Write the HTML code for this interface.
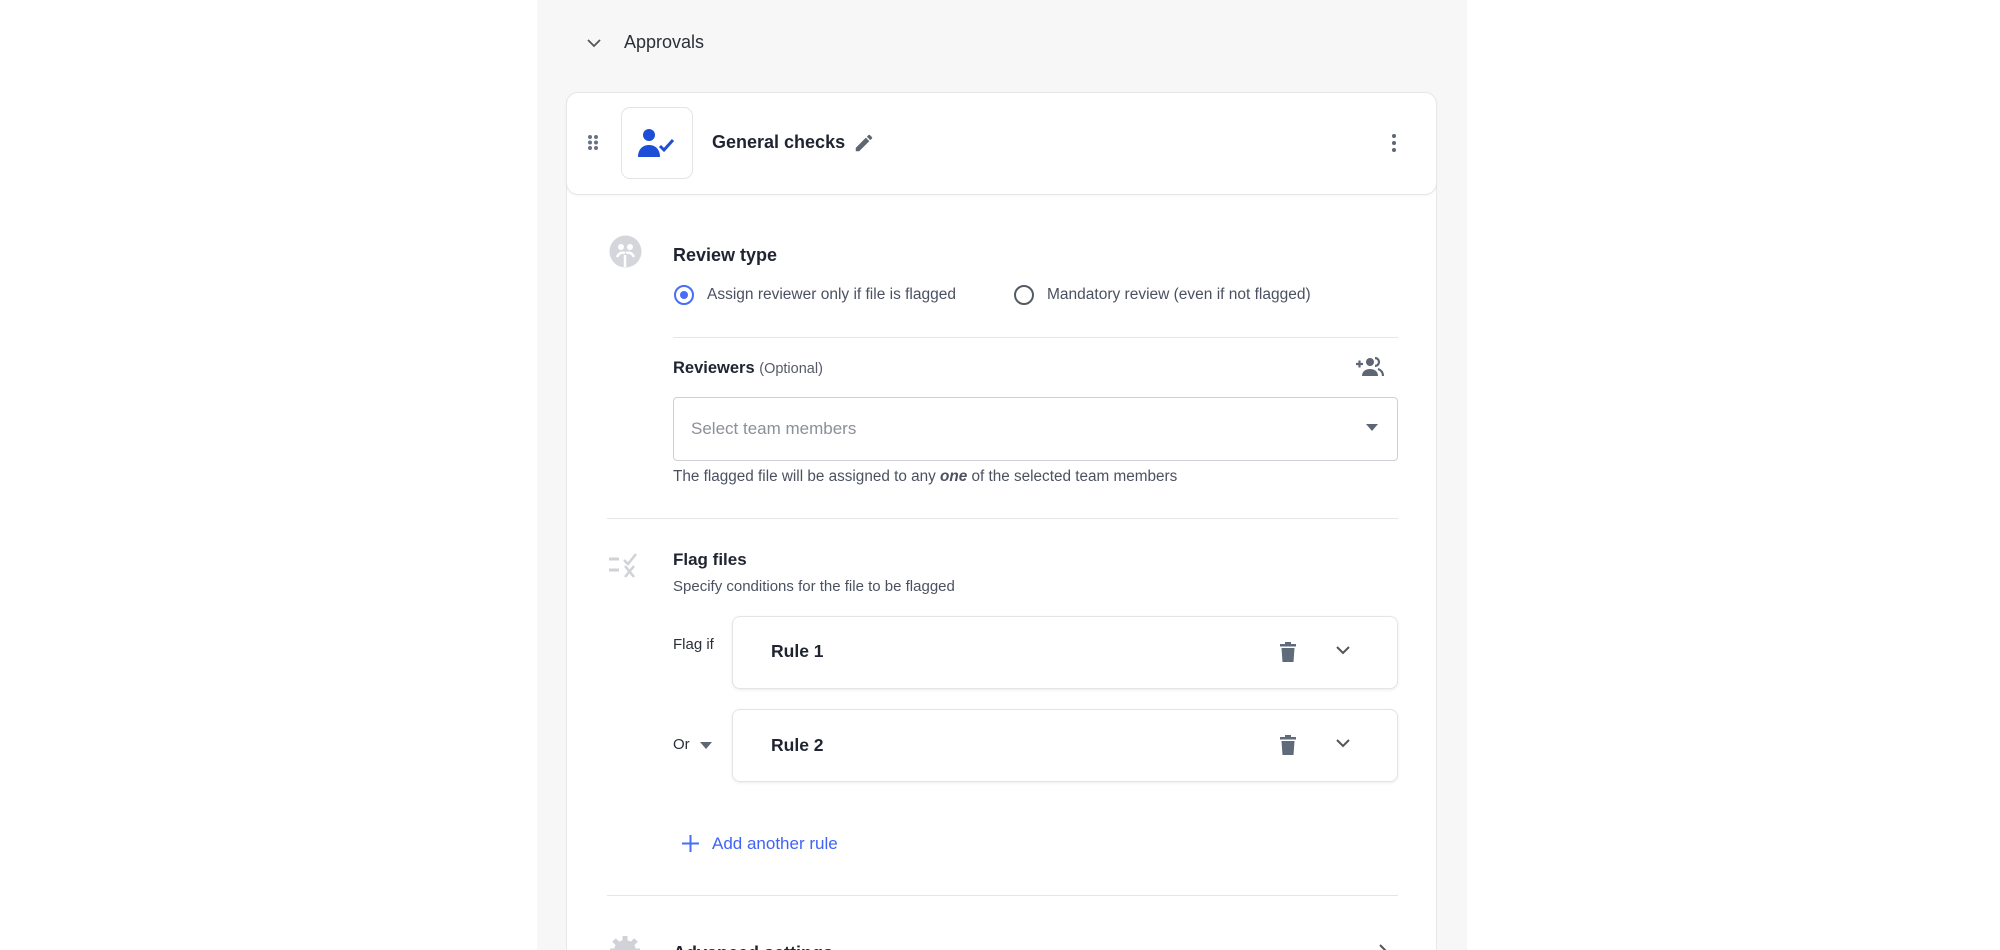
<!DOCTYPE html>
<html style="width:2000px;height:950px;overflow:hidden"><head><meta charset="utf-8"><style>
*{box-sizing:border-box;margin:0;padding:0}
body{width:2000px;height:950px;background:#fff;font-family:"Liberation Sans",sans-serif;color:#1f2430;position:relative;overflow:hidden}
.abs{position:absolute}
.panel{left:537px;top:0;width:930px;height:950px;background:#f7f7f7}
.card{left:566px;top:92px;width:871px;height:858px;background:#fff;border:1px solid #e6e7ea;border-bottom:none;border-radius:12px 12px 0 0}
.hdr{left:566px;top:92px;width:871px;height:103px;border:1px solid #e6e7ea;border-radius:12px;background:#fff;box-shadow:0 1px 2px rgba(0,0,0,.04)}
.t{position:absolute;white-space:nowrap;line-height:1}
.hr{position:absolute;height:1px;background:#e5e6e9}
.rule{position:absolute;left:732px;width:666px;height:73px;border:1px solid #e3e4e8;border-radius:8px;background:#fff;box-shadow:0 1px 3px rgba(0,0,0,.08)}
</style></head><body>
<div class="abs panel"></div>
<svg class="abs" style="left:586px;top:35px" width="16" height="16" viewBox="0 0 16 16"><path d="M2 5l6 6 6-6" fill="none" stroke="#555" stroke-width="1.8"/></svg>
<div class="t" style="left:624px;top:33px;font-size:18px;color:#2a2f3a">Approvals</div>
<div class="abs card"></div>
<div class="abs hdr"></div>
<svg class="abs" style="left:587px;top:134px" width="12" height="17"><g fill="#6b7280"><circle cx="3" cy="3" r="2"/><circle cx="9" cy="3" r="2"/><circle cx="3" cy="8.5" r="2"/><circle cx="9" cy="8.5" r="2"/><circle cx="3" cy="14" r="2"/><circle cx="9" cy="14" r="2"/></g></svg>
<div class="abs" style="left:621px;top:107px;width:72px;height:72px;border:1px solid #e3e4e8;border-radius:9px;background:#fff"></div>
<svg class="abs" style="left:637px;top:128px" width="40" height="30" viewBox="0 0 40 30"><g fill="#1d4ed8"><circle cx="12" cy="7" r="6"/><path d="M1 29c0-8 5-12 11-12s11 4 11 12z"/></g><path d="M23 18l4 4 9-10" fill="none" stroke="#1d4ed8" stroke-width="3"/></svg>
<div class="t" style="left:712px;top:133px;font-size:18px;font-weight:bold;color:#1f2430">General checks</div>
<svg class="abs" style="left:853px;top:132px" width="22" height="22" viewBox="0 0 24 24"><path d="M3 17.25V21h3.75L17.8 9.94l-3.75-3.75zM20.7 7.04a1 1 0 000-1.41l-2.34-2.34a1 1 0 00-1.41 0l-1.830 1.83 3.75 3.75z" fill="#5f6673"/></svg>
<svg class="abs" style="left:1390px;top:133px" width="8" height="20"><g fill="#5f6673"><circle cx="4" cy="3" r="2"/><circle cx="4" cy="10" r="2"/><circle cx="4" cy="17" r="2"/></g></svg>

<svg class="abs" style="left:609px;top:235px" width="33" height="33" viewBox="0 0 33 33"><circle cx="16.5" cy="16.5" r="16" fill="#d4d6db"/><circle cx="12" cy="12" r="3" fill="#fff"/><circle cx="21" cy="12" r="3" fill="#fff"/><path d="M8 22c2-4 5-5 8-4M25 22c-2-4-5-5-8-4M16 20v12" stroke="#fff" stroke-width="2.5" fill="none"/></svg>
<div class="t" style="left:673px;top:246px;font-size:18px;font-weight:bold;color:#1f2430">Review type</div>
<div class="abs" style="left:674px;top:285px;width:20px;height:20px;border:2px solid #4a6cf7;border-radius:50%"></div>
<div class="abs" style="left:680px;top:291px;width:8px;height:8px;background:#4a6cf7;border-radius:50%"></div>
<div class="t" style="left:707px;top:287px;font-size:15.5px;color:#4b5160">Assign reviewer only if file is flagged</div>
<div class="abs" style="left:1014px;top:285px;width:20px;height:20px;border:2px solid #555b66;border-radius:50%"></div>
<div class="t" style="left:1047px;top:287px;font-size:15.5px;color:#4b5160">Mandatory review (even if not flagged)</div>
<div class="hr" style="left:673px;top:337px;width:725px"></div>
<div class="t" style="left:673px;top:360px;font-size:16.5px;font-weight:bold;color:#1f2430">Reviewers <span style="font-weight:normal;font-size:14.5px;color:#555b66">(Optional)</span></div>
<svg class="abs" style="left:1355px;top:356px" width="30" height="22" viewBox="0 0 30 22"><path d="M1 8h7M4.5 4.5v7" stroke="#5f6673" stroke-width="2.2"/><circle cx="15" cy="6" r="4" fill="#5f6673"/><path d="M7 20c0-5 4-7 8-7s8 2 8 7z" fill="#5f6673"/><path d="M20 2a4 4 0 010 8M23 13c3 1 5 3 5 7" stroke="#5f6673" stroke-width="2.2" fill="none"/></svg>
<div class="abs" style="left:673px;top:397px;width:725px;height:64px;border:1px solid #cfd1d6;border-radius:4px"></div>
<div class="t" style="left:691px;top:420px;font-size:17px;color:#8a8f99">Select team members</div>
<svg class="abs" style="left:1366px;top:424px" width="12" height="8"><path d="M0 0h12L6 7z" fill="#5f6673"/></svg>
<div class="t" style="left:673px;top:469px;font-size:15.3px;color:#4b5160">The flagged file will be assigned to any <b><i>one</i></b> of the selected team members</div>
<div class="hr" style="left:607px;top:518px;width:791px"></div>

<svg class="abs" style="left:609px;top:553px" width="30" height="25" viewBox="0 0 30 25"><path d="M0 6h10M0 17h10" stroke="#d0d2d7" stroke-width="3"/><path d="M15 7l4 4 8-10M16 13l9 11M25 13l-9 11" stroke="#d0d2d7" stroke-width="2.5" fill="none"/></svg>
<div class="t" style="left:673px;top:551px;font-size:17px;font-weight:bold;color:#1f2430">Flag files</div>
<div class="t" style="left:673px;top:579px;font-size:15px;color:#4b5160">Specify conditions for the file to be flagged</div>
<div class="t" style="left:673px;top:637px;font-size:15px;color:#2a2f3a">Flag if</div>
<div class="rule" style="top:616px"></div>
<div class="t" style="left:771px;top:643px;font-size:17.5px;font-weight:bold;color:#1f2430">Rule 1</div>
<svg class="abs" style="left:1280px;top:642px" width="16" height="20" viewBox="0 0 16 20"><path d="M5 0h6v2h5v2.5H0V2h5zM1.5 6h13l-1 14h-11z" fill="#5f6b7a"/></svg>
<svg class="abs" style="left:1335px;top:645px" width="16" height="12"><path d="M2 2l6 6 6-6" fill="none" stroke="#555" stroke-width="2"/></svg>
<div class="t" style="left:673px;top:737px;font-size:15px;color:#2a2f3a">Or</div>
<svg class="abs" style="left:700px;top:742px" width="12" height="8"><path d="M0 0h12L6 7z" fill="#5f6673"/></svg>
<div class="rule" style="top:709px"></div>
<div class="t" style="left:771px;top:737px;font-size:17.5px;font-weight:bold;color:#1f2430">Rule 2</div>
<svg class="abs" style="left:1280px;top:735px" width="16" height="20" viewBox="0 0 16 20"><path d="M5 0h6v2h5v2.5H0V2h5zM1.5 6h13l-1 14h-11z" fill="#5f6b7a"/></svg>
<svg class="abs" style="left:1335px;top:738px" width="16" height="12"><path d="M2 2l6 6 6-6" fill="none" stroke="#555" stroke-width="2"/></svg>
<svg class="abs" style="left:682px;top:835px" width="17" height="17"><path d="M8.5 0v17M0 8.5h17" stroke="#4a6cf7" stroke-width="2"/></svg>
<div class="t" style="left:712px;top:835px;font-size:17px;color:#3f63f5">Add another rule</div>
<div class="hr" style="left:607px;top:895px;width:791px"></div>
<svg class="abs" style="left:609px;top:935px" width="32" height="32" viewBox="0 0 32 32"><circle cx="16" cy="16" r="11" fill="#d0d2d7"/><g stroke="#d0d2d7" stroke-width="5"><path d="M16 1v30M1 16h30M5 5l22 22M27 5L5 27"/></g></svg>
<div class="t" style="left:673px;top:944px;font-size:18px;font-weight:bold;color:#1f2430">Advanced settings</div>
<svg class="abs" style="left:1378px;top:944px" width="10" height="14"><path d="M2 1l6 6-6 6" fill="none" stroke="#555" stroke-width="2"/></svg>
</body></html>
